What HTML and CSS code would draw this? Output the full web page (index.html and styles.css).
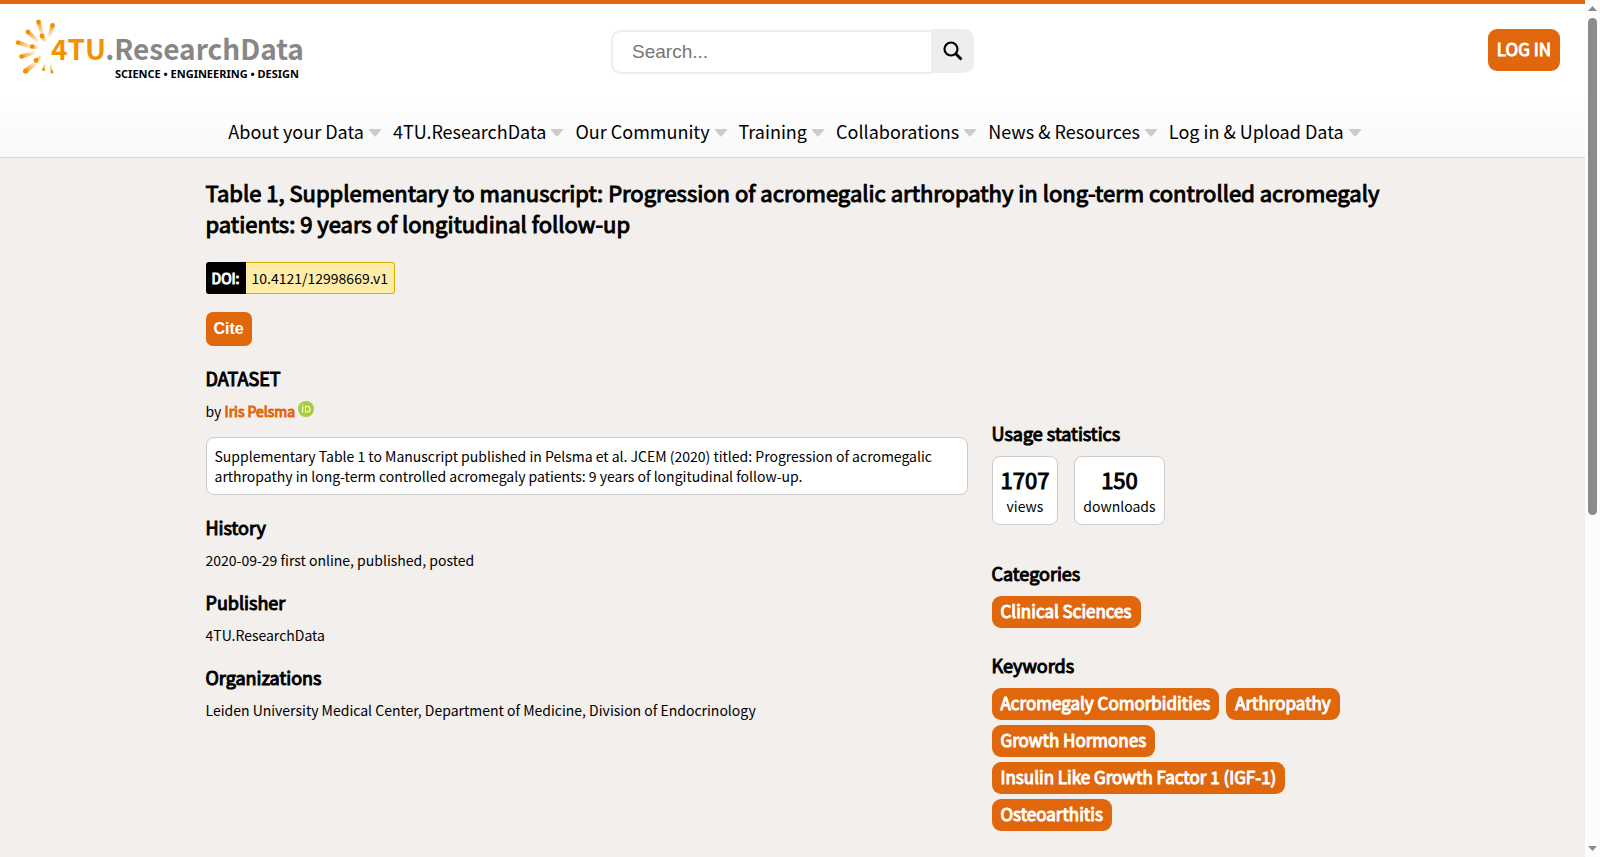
FILE: index.html
```html
<!DOCTYPE html>
<html lang="en">
<head>
<meta charset="UTF-8">
<meta name="viewport" content="width=device-width, initial-scale=1.0">
<title>Table 1, Supplementary to manuscript</title>
<link rel="stylesheet" href="styles.css">
</head>

<body>
  <div class="page">
    <header class="header">
      <div class="topbar">
        <a class="logo" href="#" aria-label="4TU.ResearchData">
          <svg width="300" height="64" viewBox="14 16 300 64">
            <defs>
              <linearGradient id="ray" x1="0" y1="0" x2="1" y2="0">
                <stop offset="0" stop-color="#f39200" stop-opacity="0.9"/>
                <stop offset="1" stop-color="#f39200" stop-opacity="0.1"/>
              </linearGradient>
            </defs>
            <g fill="url(#ray)">
              <path transform="translate(38.5 22) rotate(73)" d="M0-2L14-1.7V1.7L0 2z"/>
              <path transform="translate(52.5 25.5) rotate(107)" d="M0-2L12-1.5V1.5L0 2z"/>
              <path transform="translate(28 32) rotate(43)" d="M0-2L14-1.7V1.7L0 2z"/>
              <path transform="translate(42 36) rotate(58)" d="M0-2L7-1.5V1.5L0 2z"/>
              <path transform="translate(18 42.5) rotate(18)" d="M0-2L14-1.7V1.7L0 2z"/>
              <path transform="translate(32 46.5) rotate(16)" d="M0-2L6-1.5V1.5L0 2z"/>
              <path transform="translate(21.5 56.5) rotate(-16)" d="M0-2L14-1.7V1.7L0 2z"/>
              <path transform="translate(36 60.5) rotate(-40)" d="M0-2L7-1.5V1.5L0 2z"/>
              <path transform="translate(25.5 71) rotate(-37)" d="M0-2.4L14-2V2L0 2.4z"/>
              <path transform="translate(43.5 69.5) rotate(-75)" d="M0-1L6-1V1L0 1z"/>
              <path transform="translate(52 72) rotate(-105)" d="M0-1L8-1V1L0 1z"/>
            </g>
            <g fill="#f39200">
              <circle cx="38.5" cy="22" r="2.4"/>
              <circle cx="52.5" cy="25.5" r="2.4"/>
              <circle cx="28" cy="32" r="2.4"/>
              <circle cx="42" cy="36" r="2.4"/>
              <circle cx="18" cy="42.5" r="2.3"/>
              <circle cx="32" cy="46.5" r="2.3"/>
              <circle cx="21.5" cy="56.5" r="2.3"/>
              <circle cx="36" cy="60.5" r="2.4"/>
              <circle cx="25.5" cy="71" r="2.6"/>
              <circle cx="43.5" cy="69.5" r="1.5"/>
              <circle cx="52" cy="72" r="1.5"/>
            </g>
            <text class="logo-name" x="51" y="60"><tspan class="logo-4tu">4TU</tspan>.ResearchData</text>
            <text class="logo-tagline" x="115" y="78">SCIENCE • ENGINEERING • DESIGN</text>
          </svg>
        </a>
        <form class="search">
          <input class="search-input" type="text" placeholder="Search..." aria-label="Search">
          <button class="search-button" type="button" aria-label="Search">
            <svg width="20" height="20" viewBox="0 0 20 20" fill="none" stroke="#000">
              <circle cx="8" cy="8" r="6.5" stroke-width="2.2"/>
              <path d="M12.5 12.5L18.5 18.5" stroke-width="2.8"/>
            </svg>
          </button>
        </form>
        <a class="login" href="#">LOG IN</a>
      </div>
      <nav class="menu">
        <a href="#">About your Data</a>
        <a href="#">4TU.ResearchData</a>
        <a href="#">Our Community</a>
        <a href="#">Training</a>
        <a href="#">Collaborations</a>
        <a href="#">News &amp; Resources</a>
        <a href="#">Log in &amp; Upload Data</a>
      </nav>
    </header>

    <main class="content">
      <h1>Table 1, Supplementary to manuscript: Progression of acromegalic arthropathy in long-term controlled acromegaly patients: 9 years of longitudinal follow-up</h1>
      <div class="doi"><span class="doi-label">DOI:</span><a class="doi-value" href="#">10.4121/12998669.v1</a></div>
      <button class="cite" type="button">Cite</button>

      <div class="columns">
        <div class="main-column">
          <h2>DATASET</h2>
          <p>by <a class="author" href="#">Iris Pelsma</a>
            <svg class="orcid" width="16" height="16" viewBox="0 0 16 16">
              <circle cx="8" cy="8" r="8" fill="#a6ce39"/>
              <path d="M4.7 5.5V11.5M7.5 5.2H9.2A2.9 2.9 0 0 1 9.2 11H7.5z" fill="none" stroke="#fff" stroke-width="1.1"/>
              <circle cx="4.7" cy="3.9" r="0.7" fill="#fff"/>
            </svg>
          </p>
          <div class="description">Supplementary Table 1 to Manuscript published in Pelsma et al. JCEM (2020) titled: Progression of acromegalic arthropathy in long-term controlled acromegaly patients: 9 years of longitudinal follow-up.</div>
          <h2>History</h2>
          <p>2020-09-29 first online, published, posted</p>
          <h2>Publisher</h2>
          <p>4TU.ResearchData</p>
          <h2>Organizations</h2>
          <p>Leiden University Medical Center, Department of Medicine, Division of Endocrinology</p>
        </div>

        <aside class="side-column">
          <h2>Usage statistics</h2>
          <div class="stats">
            <div class="stat"><strong>1707</strong>views</div>
            <div class="stat"><strong>150</strong>downloads</div>
          </div>
          <h2>Categories</h2>
          <div class="tags">
            <a href="#">Clinical Sciences</a>
          </div>
          <h2>Keywords</h2>
          <div class="tags">
            <a href="#">Acromegaly Comorbidities</a>
            <a href="#">Arthropathy</a>
            <a href="#">Growth Hormones</a>
            <a href="#">Insulin Like Growth Factor 1 (IGF-1)</a>
            <a href="#">Osteoarthitis</a>
          </div>
        </aside>
      </div>
    </main>
  </div>

  <div class="scrollbar" aria-hidden="true">
    <svg width="9" height="5" viewBox="0 0 9 5"><path d="M0 5L4.5 0L9 5z" fill="#8b8b8b"/></svg>
    <div class="scroll-track"><div class="scroll-thumb"></div></div>
    <svg width="9" height="5" viewBox="0 0 9 5"><path d="M0 0L4.5 5L9 0z" fill="#8b8b8b"/></svg>
  </div>
</body>
</html>
```
FILE: styles.css
```css
* {
  box-sizing: border-box;
}

body {
  margin: 0;
  display: flex;
  height: 100vh;
  overflow: hidden;
  background-color: #f2efec;
  font-family: "Noto Sans CJK JP", "Noto Sans", sans-serif;
  font-size: 14px;
  line-height: 20px;
  color: #000;
}

a {
  color: inherit;
  text-decoration: none;
}

.page {
  flex: 1;
  min-width: 0;
}

/* header */

.header {
  border-top: 4px solid #e0670c;
  border-bottom: 1px solid #d8d8d8;
  background: linear-gradient(#fff 60%, #f8f8f8);
}

.topbar {
  display: grid;
  grid-template-columns: 1fr auto 1fr;
  align-items: start;
  height: 100px;
  padding: 12px 14px 0;
}

.logo svg {
  display: block;
}

.logo-name {
  font-size: 28px;
  font-weight: 700;
  fill: #878787;
}

.logo-4tu {
  fill: #f39200;
}

.logo-tagline {
  font-family: "Noto Sans", sans-serif;
  font-size: 11px;
  font-weight: 700;
}

.search {
  display: flex;
  align-items: start;
  padding-top: 13px;
}

.search-input {
  width: 320px;
  height: 44px;
  margin-top: 1px;
  padding: 0 19px;
  border: 2px solid #eee;
  border-right: 0;
  border-radius: 10px 0 0 10px;
  font-family: "Liberation Sans", Arial, sans-serif;
  font-size: 19px;
}

.search-input::placeholder {
  color: #757575;
}

.search-button {
  display: flex;
  align-items: center;
  justify-content: center;
  width: 43px;
  height: 44px;
  padding: 0;
  border: 0;
  border-radius: 0 10px 10px 0;
  background-color: #eee;
}

.login {
  justify-self: end;
  margin: 13px 11px 0 0;
  padding: 10px 9px 12px;
  border-radius: 9px;
  background-color: #e0670c;
  color: #fff;
  font-size: 17px;
  -webkit-text-stroke: 1px;
}

.menu {
  display: flex;
  justify-content: center;
  gap: 11px;
  padding: 17px 0 16px 5px;
  font-size: 18px;
}

.menu a::after {
  content: "";
  display: inline-block;
  margin-left: 4px;
  border: 7px solid transparent;
  border-top: 8px solid #ccc;
  border-bottom: 0;
  border-radius: 2px;
  vertical-align: 2px;
}

/* dataset */

.content {
  max-width: 1174px;
  margin: 0 auto;
  padding-top: 19px;
}

h1 {
  margin: 0 0 23px;
  font-size: 22px;
  font-weight: 400;
  line-height: 31px;
  -webkit-text-stroke: 1px;
}

h2 {
  margin: 0;
  font-size: 18px;
  font-weight: 400;
  line-height: 25px;
  -webkit-text-stroke: 1px;
}

p {
  margin: 10px 0 20px;
}

.doi {
  display: flex;
  width: max-content;
  margin-bottom: 18px;
  line-height: 30px;
}

.doi-label {
  padding: 1px 6px;
  border-radius: 3px 0 0 3px;
  background-color: #000;
  color: #fff;
  -webkit-text-stroke: 1px;
}

.doi-value {
  padding: 0 6px;
  border: 1px solid #d9ae00;
  border-left: 0;
  border-radius: 0 3px 3px 0;
  background-color: #ffeca8;
}

.cite {
  display: block;
  padding: 7px 8px;
  border: 0;
  border-radius: 7px;
  background-color: #e0670c;
  color: #fff;
  font-family: "Liberation Sans", Arial, sans-serif;
  font-size: 16px;
  font-weight: 700;
  line-height: 20px;
}

.columns {
  display: flex;
  gap: 24px;
  margin-top: 20px;
}

.main-column {
  flex: 1;
}

.side-column {
  width: 388px;
  padding-top: 55px;
}

.author {
  color: #e0670c;
  -webkit-text-stroke: 1px;
}

.description {
  margin: -4px 0 20px;
  padding: 8px;
  border: 1px solid #ccc;
  border-radius: 8px;
  background-color: #fff;
}

.stats {
  display: flex;
  gap: 16px;
  margin: 10px 0 36px;
}

.stat {
  padding: 7px 8px 8px;
  border: 1px solid #ccc;
  border-radius: 8px;
  background-color: #fff;
  text-align: center;
}

.stat strong {
  display: block;
  margin-bottom: 1px;
  font-size: 22px;
  font-weight: 400;
  line-height: 31px;
  -webkit-text-stroke: 1px;
}

.tags {
  display: flex;
  flex-wrap: wrap;
  gap: 5px 7px;
  margin: 10px 0 25px;
}

.tags a {
  padding: 5px 9px 7px;
  border-radius: 9px;
  background-color: #e0670c;
  color: #fff;
  font-size: 17px;
  -webkit-text-stroke: 1px;
}

/* scrollbar */

.scrollbar {
  display: flex;
  flex-direction: column;
  align-items: center;
  width: 15px;
  padding: 6px 0;
  background-color: #fcfcfc;
}

.scroll-track {
  flex: 1;
  padding-top: 7px;
}

.scroll-thumb {
  width: 9px;
  height: 60%;
  border-radius: 5px;
  background-color: #8b8b8b;
}
```
